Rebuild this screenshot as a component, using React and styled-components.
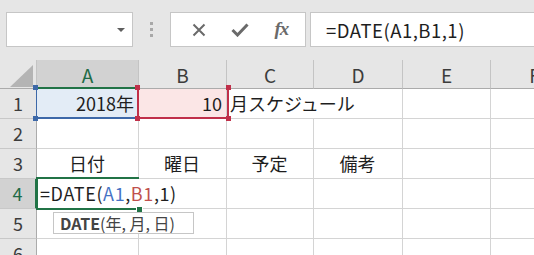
import React from "react";
import styled, { createGlobalStyle } from "styled-components";

const GlobalStyle = createGlobalStyle`
  html, body { margin: 0; padding: 0; background: #ffffff; overflow: hidden; }
  * { box-sizing: border-box; }
`;

const CJK = `"Noto Sans CJK JP", "Noto Sans", sans-serif`;

const Page = styled.div`
  width: 534px;
  height: 255px;
  overflow: hidden;
  font-family: ${CJK};
  background: #ffffff;
`;

const Bar = styled.div`
  height: 60px;
  background: #e6e6e6;
  display: flex;
  align-items: flex-start;
  padding: 12px 0 0 6px;
`;

const Box = styled.div`
  height: 35px;
  background: #ffffff;
  border: 1px solid #c6c6c6;
  display: flex;
  align-items: center;
`;

const NameBox = styled(Box)`
  width: 127px;
  justify-content: flex-end;
  padding-right: 7px;
`;

const Caret = styled.span`
  width: 0;
  height: 0;
  border-left: 4px solid transparent;
  border-right: 4px solid transparent;
  border-top: 4px solid #5e5e5e;
`;

const Grip = styled.div`
  width: 37px;
  height: 35px;
  display: flex;
  flex-direction: column;
  align-items: center;
  justify-content: center;
  gap: 3px;
`;

const Dot = styled.span`
  width: 3px;
  height: 3px;
  background: #a8a8a8;
`;

const FuncBox = styled(Box)`
  width: 136px;
  justify-content: space-around;
  padding: 0 4px 0 8px;
`;

const Fx = styled.span`
  font-family: "Liberation Serif", serif;
  font-style: italic;
  font-weight: bold;
  font-size: 19px;
  color: #6a6a6a;
  letter-spacing: -1px;
  margin-top: -2px;
`;

const FormulaBox = styled(Box)`
  flex: 1;
  margin-left: 4px;
  border-right: none;
  padding-left: 15px;
  font-size: 18.5px;
  letter-spacing: 0.5px;
  color: #1e1e1e;
`;

const Sheet = styled.div`
  position: relative;
  display: grid;
  grid-template-columns: 37px 102px 88px 87px 89px 88px 88px;
  grid-template-rows: 29px repeat(6, 30px);
`;

const Corner = styled.div`
  background: #e6e6e6;
  border-right: 1px solid #c4c4c4;
  border-bottom: 1px solid #ababab;
  display: flex;
  align-items: flex-end;
  justify-content: flex-end;
  padding: 0 3px 1px 0;
`;

const Triangle = styled.span`
  width: 0;
  height: 0;
  border-left: 23px solid transparent;
  border-bottom: 22px solid #b4b4b4;
`;

const ColHead = styled.div`
  background: ${(p) => (p.$sel ? "#d2d2d2" : "#e6e6e6")};
  border-right: 1px solid #c4c4c4;
  border-bottom: ${(p) => (p.$sel ? "2px solid #217346" : "1px solid #ababab")};
  color: ${(p) => (p.$sel ? "#1f6b46" : "#3c3c3c")};
  font-size: 19px;
  display: flex;
  justify-content: center;
  align-items: center;
  padding-top: ${(p) => (p.$sel ? "1px" : "0")};
  white-space: nowrap;
  overflow: hidden;
`;

const RowHead = styled.div`
  background: ${(p) => (p.$sel ? "#d2d2d2" : "#e6e6e6")};
  border-right: ${(p) => (p.$sel ? "2px solid #217346" : "1px solid #ababab")};
  border-bottom: 1px solid #c8c8c8;
  color: ${(p) => (p.$sel ? "#1f6b46" : "#3c3c3c")};
  font-size: 18px;
  line-height: 29px;
  text-align: center;
  overflow: hidden;
`;

const Cell = styled.div`
  border-right: ${(p) => (p.$flow ? "none" : "1px solid #d4d4d4")};
  border-bottom: 1px solid #d4d4d4;
  background: ${(p) => p.$fill || "transparent"};
  font-size: 18px;
  line-height: 29px;
  color: #1e1e1e;
  text-align: ${(p) => p.$align || "left"};
  padding: 0 4px 0 3px;
  white-space: nowrap;
  overflow: ${(p) => (p.$flow ? "visible" : "hidden")};
  position: relative;
  z-index: ${(p) => (p.$flow ? 1 : 0)};
`;

const FormulaText = styled.span`
  letter-spacing: 0.6px;
`;

const Ref = styled.span`
  color: ${(p) => p.$c};
`;

const Range = styled.div`
  position: absolute;
  pointer-events: none;
  z-index: 2;
  border-style: solid;
  border-color: ${(p) => p.$c};
  border-width: ${(p) => p.$w};
`;

const Handle = styled.span`
  position: absolute;
  width: 5px;
  height: 5px;
  background: ${(p) => p.$c};
  ${(p) => (p.$top ? "top: -3px;" : "bottom: -4px;")}
  ${(p) => (p.$left ? "left: -4px;" : "right: -4px;")}
`;

const FillHandle = styled.span`
  position: absolute;
  right: -4px;
  bottom: -5px;
  width: 7px;
  height: 7px;
  background: #217346;
  border: 1px solid #ffffff;
`;

const Tip = styled.div`
  position: absolute;
  z-index: 3;
  left: 53px;
  top: 152px;
  width: 141px;
  height: 22px;
  background: #ffffff;
  border: 1px solid #c6c6c6;
  font-family: ${CJK};
  font-size: 16px;
  line-height: 20px;
  color: #444444;
  padding-left: 6px;
  white-space: nowrap;
  overflow: hidden;
`;

const B = styled.b`
  font-weight: bold;
`;

const BLUE = "#4472c4";
const RED = "#c0504d";

const cols = ["A", "B", "C", "D", "E", "F"];

const rows = [
  [{ t: "2018年", align: "right", fill: "#e3ecf6" }, { t: "10", align: "right", fill: "#fbe6e6" }, { t: "月スケジュール", flow: true }, {}, {}, {}],
  [{}, {}, {}, {}, {}, {}],
  [{ t: "日付", align: "center" }, { t: "曜日", align: "center" }, { t: "予定", align: "center" }, { t: "備考", align: "center" }, {}, {}],
  [{ formula: true, flow: true }, {}, {}, {}, {}, {}],
  [{}, {}, {}, {}, {}, {}],
  [{}, {}, {}, {}, {}, {}],
];

function Formula() {
  return (
    <FormulaText>
      =DATE(<Ref $c={BLUE}>A1</Ref>,<Ref $c={RED}>B1</Ref>,1)
    </FormulaText>
  );
}

export default function App() {
  return (
    <Page>
      <GlobalStyle />
      <Bar>
        <NameBox>
          <Caret />
        </NameBox>
        <Grip>
          <Dot />
          <Dot />
          <Dot />
        </Grip>
        <FuncBox>
          <svg width="14" height="14" viewBox="0 0 14 14">
            <path d="M1.5 1.5 L12.5 12.5 M12.5 1.5 L1.5 12.5" stroke="#6a6a6a" strokeWidth="2" fill="none" />
          </svg>
          <svg width="18" height="14" viewBox="0 0 18 14">
            <path d="M1.5 7 L6.5 12 L16.5 1.5" stroke="#6a6a6a" strokeWidth="3" fill="none" />
          </svg>
          <Fx>fx</Fx>
        </FuncBox>
        <FormulaBox>
          <span>=DATE(A1,B1,1)</span>
        </FormulaBox>
      </Bar>
      <Sheet>
        <Corner>
          <Triangle />
        </Corner>
        {cols.map((c) => (
          <ColHead key={c} $sel={c === "A"}>
            {c}
          </ColHead>
        ))}
        {rows.map((r, i) => (
          <React.Fragment key={i}>
            <RowHead $sel={i === 3}>{i + 1}</RowHead>
            {r.map((cell, j) => (
              <Cell key={j} $align={cell.align} $fill={cell.fill} $flow={cell.flow}>
                {cell.formula ? <Formula /> : cell.t}
              </Cell>
            ))}
          </React.Fragment>
        ))}
        <Range $c="#3d68a8" $w="0 0 2px 1px" style={{ left: 36, top: 28, width: 103, height: 31 }}>
          <Handle $c="#3d68a8" $top $left />
          <Handle $c="#3d68a8" $left />
        </Range>
        <Range $c="#c0304a" $w="0 2px 2px 2px" style={{ left: 137, top: 28, width: 92, height: 31 }}>
          <Handle $c="#c0304a" $top $left />
          <Handle $c="#c0304a" $top />
          <Handle $c="#c0304a" $left />
          <Handle $c="#c0304a" />
        </Range>
        <Range $c="#217346" $w="2px 0 2px 2px" style={{ left: 36, top: 117, width: 103, height: 33 }}>
          <FillHandle />
        </Range>
        <Tip>
          <B>DATE</B>(年, 月, 日)
        </Tip>
      </Sheet>
    </Page>
  );
}
